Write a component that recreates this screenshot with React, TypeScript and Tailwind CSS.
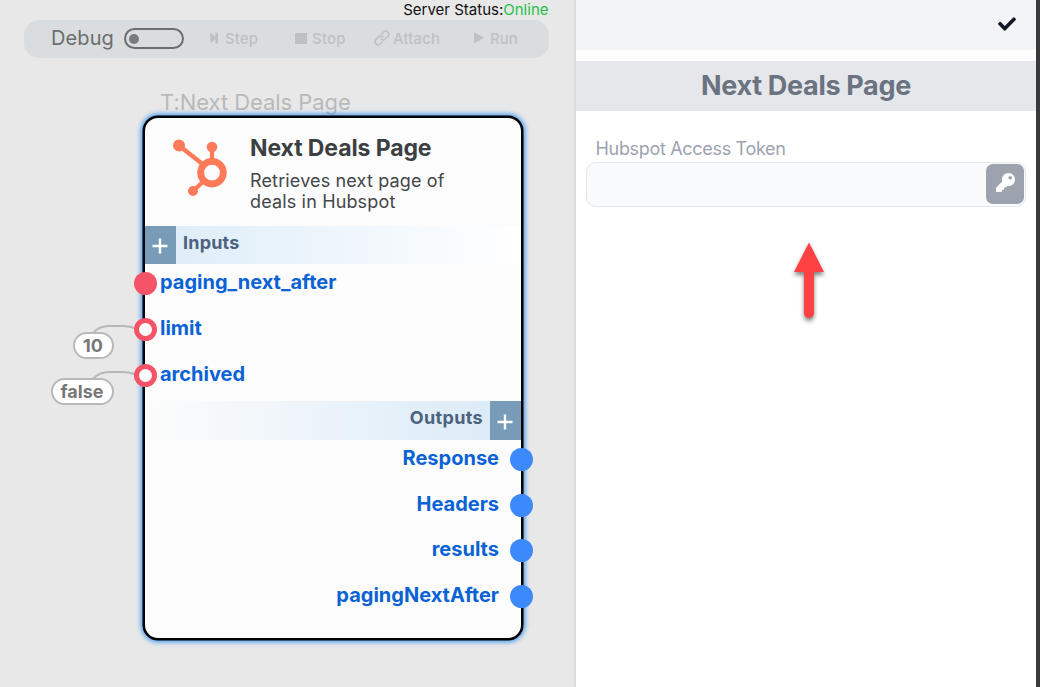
import React from "react";
import { FaCheck, FaKey } from "react-icons/fa";

type Input = { name: string; value?: string; pill?: string };

const inputs: Input[] = [
  { name: "paging_next_after" },
  { name: "limit", value: "10", pill: "left-[-72px] w-[41px]" },
  { name: "archived", value: "false", pill: "left-[-94px] w-[63px]" },
];
const outputs = ["Response", "Headers", "results", "pagingNextAfter"];

function Toolbar() {
  return (
    <div className="ml-6 flex h-[38px] w-[525px] items-center rounded-[15px] bg-[#d9dddf] text-[15px] font-medium text-[#bfc0c1]">
      <span className="ml-[27px] w-[73px] pb-[2px] text-[20px] font-normal tracking-[0.1px] text-[#6d6d6d]">Debug</span>
      <span className="mb-px flex h-[21px] w-[60px] items-center rounded-full border-2 border-[#6d6d6d] pl-[3px]">
        <span className="size-[10px] rounded-full bg-[#7b7b7b]" />
      </span>
      <svg className="mb-[2px] ml-[26px] h-[12px] w-[8px]" viewBox="0 0 8 12" fill="currentColor">
        <path d="M.3.7 5.4 4.8V.5H8v11H5.4V7.2L.3 11.3V.7z" />
      </svg>
      <span className="ml-[7px] w-[70px] tracking-[0.1px]">Step</span>
      <svg className="mb-[1px] h-[12px] w-[12px]" viewBox="0 0 12 12"><path fill="currentColor" d="M0 0h12v11H0z" /></svg>
      <span className="ml-[5px] w-[61px] tracking-[0.2px]">Stop</span>
      <svg className="mb-[2px] ml-px h-[16px] w-[16px]" viewBox="0 0 24 24" fill="none" stroke="currentColor" strokeWidth="2.4" strokeLinecap="round">
        <path d="M10.5 13.5a4.6 4.6 0 0 0 6.5 0l4-4a4.6 4.6 0 0 0-6.5-6.5l-3 3M13.5 10.5a4.6 4.6 0 0 0-6.5 0l-4 4a4.6 4.6 0 0 0 6.5 6.5l3-3" />
      </svg>
      <span className="ml-[3px] w-[81px] tracking-[0.15px]">Attach</span>
      <svg className="mb-[2px] h-[12px] w-[10px]" viewBox="0 0 10 12"><path fill="currentColor" d="M0 0l10 5.7L0 11.4z" /></svg>
      <span className="ml-[6px]">Run</span>
    </div>
  );
}

function Hubspot() {
  return (
    <svg className="h-[58px] w-[56px] shrink-0" viewBox="0 0 56 58" fill="#ff7a59">
      <path d="M6 6.5 32 27M39 8.5V24M20 52l13-12" stroke="#ff7a59" strokeWidth="4.3" />
      <circle cx="6" cy="6.5" r="6" />
      <circle cx="39" cy="8" r="5.3" />
      <circle cx="20" cy="52" r="5" />
      <circle cx="39" cy="33.7" r="11.3" fill="#fcfcfc" stroke="#ff7a59" strokeWidth="6.8" />
    </svg>
  );
}

function Plus() {
  return (
    <span className="flex w-[31px] items-center justify-center bg-[#789cb8] pr-px pt-[2px]">
      <svg className="size-4" viewBox="0 0 16 16"><path d="M8 .5v15M.5 8h15" stroke="#fff" strokeWidth="2.4" /></svg>
    </span>
  );
}

function NodeCard() {
  return (
    <div className="absolute left-[143px] top-[116px] h-[524px] w-[380px] rounded-[15px] border-2 border-black bg-[#fcfcfc] shadow-[0_0_0_0.5px_#000,0_0_5px_2px_#3f98f0]">
      <div className="flex h-[108px] pl-[28px] pt-[21px]">
        <Hubspot />
        <div className="ml-[21px]">
          <h2 className="-mt-px text-[23px] font-bold leading-[20px] tracking-[-0.1px] text-[#3c3f42]">Next Deals Page</h2>
          <p className="mt-[12px] w-[230px] text-[18px] leading-[21px] tracking-[0.15px] text-[#444648]">Retrieves next page of<br />deals in Hubspot</p>
        </div>
      </div>
      <div className="flex h-[38px] bg-linear-to-r from-[#dcecf8] to-white">
        <Plus />
        <span className="ml-[7px] text-[18px] font-bold leading-[34px] tracking-[0.2px] text-[#4c627e]">Inputs</span>
      </div>
      <div className="flex h-[137px] flex-col gap-[10px]">
        {inputs.map((i) => (
          <div key={i.name} className="relative flex h-[36px] items-center pl-[15px] text-[20px] font-bold text-[#0a62d5]">
            {i.value && (
              <svg className="absolute left-[-53px] top-[14px] h-[12px] w-[46px]" viewBox="0 0 46 12" fill="none" stroke="#b8b8b8" strokeWidth="2">
                <path d="M1 9Q7 2 17 2H31Q38 2 45 5" />
              </svg>
            )}
            {i.value && (
              <span className={"absolute top-[22px] flex h-[27px] items-center justify-center rounded-full border-2 border-[#b8b8b8] bg-white pr-px text-[18px] font-bold text-[#777] " + i.pill}>{i.value}</span>
            )}
            <span className={"absolute left-[-11px] top-[8px] size-[23px] rounded-full border-[#f55367] " + (i.value ? "border-[5px] bg-white" : "bg-[#f55367]")} />
            <span>{i.name}</span>
          </div>
        ))}
      </div>
      <div className="flex h-[39px] justify-end bg-linear-to-l from-[#d9eaf7] to-[#fcfcfc]">
        <span className="mr-[7px] text-[18px] font-bold leading-[34px] tracking-[0.35px] text-[#4c627e]">Outputs</span>
        <Plus />
      </div>
      <div className="flex flex-col gap-[9.7px]">
        {outputs.map((o) => (
          <div key={o} className="relative flex h-[36px] items-center justify-end pr-[22px] text-[20px] font-bold text-[#0a62d5]">
            <span>{o}</span>
            <span className="absolute right-[-12px] top-[8px] size-[23px] rounded-full bg-[#3b89fa]" />
          </div>
        ))}
      </div>
    </div>
  );
}

export default function App() {
  return (
    <div className="flex h-[687px] w-[1040px] overflow-hidden font-['Inter',sans-serif]">
      <main className="relative w-[576px] shrink-0 border-r-2 border-[#d9dce0] bg-[#e8e8e8]">
        <div className="flex h-[20px] justify-end pr-[25.5px] text-[15px] leading-[20px] text-[#111]">
          Server Status:<span className="text-[#1fc04b]">Online</span>
        </div>
        <Toolbar />
        <span className="absolute left-[160px] top-[88px] whitespace-nowrap text-[22px] leading-[28px] tracking-[-0.05px] text-[#b9b9b9]">T:Next Deals Page</span>
        <NodeCard />
      </main>
      <aside className="relative w-[460px] shrink-0 bg-white">
        <div className="flex h-[50px] items-center justify-end bg-[#f3f4f6] pb-[2px] pr-[20px]">
          <FaCheck className="size-[18px] text-[#111827]" />
        </div>
        <h1 className="mt-[11px] h-[50px] bg-[#e5e7eb] text-center text-[27px] font-bold leading-[50px] tracking-[-0.32px] text-[#6b7280]">Next Deals Page</h1>
        <div className="px-[10px] pt-[26px]">
          <label className="block h-[25px] pl-[9.5px] text-[18px] leading-[24px] tracking-[-0.32px] text-[#9ca3af]">Hubspot Access Token</label>
          <div className="flex h-[45px] w-[440px] justify-end rounded-[10px] border border-[#e5e7eb] bg-[#f9fafb] p-[1px]">
            <button className="flex h-[40px] w-[38px] items-center justify-center rounded-[7px] bg-[#9ca3af] pb-[3px] text-white">
              <FaKey className="size-[19px]" />
            </button>
          </div>
        </div>
        <svg className="absolute left-[208px] top-[235px] h-[100px] w-[50px]" viewBox="0 0 50 100">
          <g className="[filter:drop-shadow(0_3px_2px_rgba(0,0,0,0.5))]" fill="#ff4144">
            <path d="M25 7.5 40 37H30V78a5 5 0 0 1-10 0V37H10z" />
          </g>
        </svg>
      </aside>
      <div className="grow bg-[#393a3b]" />
    </div>
  );
}
